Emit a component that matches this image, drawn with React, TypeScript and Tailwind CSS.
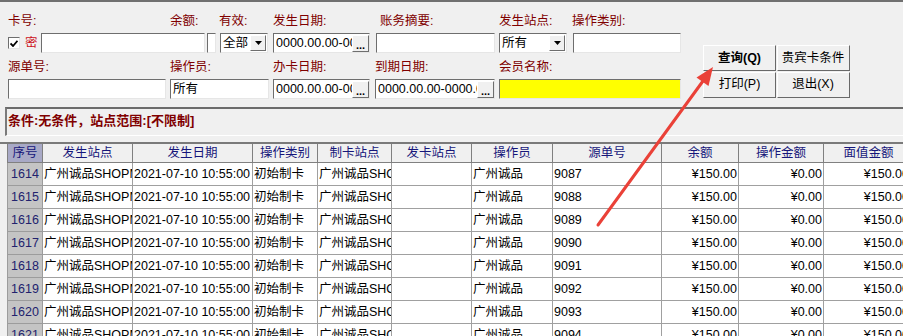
import type { ReactNode } from "react"

const cols = [
  { t: "序号", w: "w-[36px]" },
  { t: "发生站点", w: "w-[90px]" },
  { t: "发生日期", w: "w-[120px]" },
  { t: "操作类别", w: "w-[65px]" },
  { t: "制卡站点", w: "w-[74px]" },
  { t: "发卡站点", w: "w-[80px]" },
  { t: "操作员", w: "w-[81px]" },
  { t: "源单号", w: "w-[109px]" },
  { t: "余额", w: "w-[77px]" },
  { t: "操作金额", w: "w-[85px]" },
  { t: "面值金额", w: "w-[90px]" },
]

const rows = Array.from({ length: 8 }, (_, i) => ({
  no: String(1614 + i),
  cells: [
    "广州诚品SHOPMALL",
    "2021-07-10 10:55:00",
    "初始制卡",
    "广州诚品SHOPMALL",
    "",
    "广州诚品",
    String(9087 + i),
    "¥150.00",
    "¥0.00",
    "¥150.00",
  ],
}))

const Label = ({ w, children }: { w: string; children: ReactNode }) => (
  <div className={`${w} shrink-0 text-[#800000] whitespace-nowrap`}>{children}</div>
)

const Field = ({ w, bg = "bg-white", children }: { w: string; bg?: string; children?: ReactNode }) => (
  <div className={`${w} ${bg} h-[20px] shrink-0 flex items-center overflow-hidden border border-t-[#6e6e6e] border-l-[#6e6e6e] border-b-[#e6e6e6] border-r-[#e6e6e6] pl-[2px] whitespace-nowrap text-black`}>
    {children}
  </div>
)

const Raised = ({ className, children }: { className: string; children?: ReactNode }) => (
  <div className={`${className} bg-[#f0f0f0] border border-t-white border-l-white border-b-[#6e6e6e] border-r-[#6e6e6e] flex items-center justify-center shrink-0`}>
    {children}
  </div>
)

const Select = ({ w, text }: { w: string; text: string }) => (
  <Field w={w}>
    <span className="flex-1">{text}</span>
    <Raised className="w-[16px] h-[16px] mr-[1px]">
      <svg width="7" height="4" viewBox="0 0 7 4"><path d="M0 0h7L3.5 4z" fill="#000" /></svg>
    </Raised>
  </Field>
)

const DateField = ({ w, text }: { w: string; text: string }) => (
  <Field w={w}>
    <span className="flex-1 min-w-0 overflow-hidden">{text}</span>
    <Raised className="w-[17px] h-[17px]">
      <span className="font-bold leading-none mt-[4px] text-[11px]">...</span>
    </Raised>
  </Field>
)

const Btn = ({ children, bold }: { children: ReactNode; bold?: boolean }) => (
  <div className={`w-[73px] h-[26px] flex items-center justify-center bg-[#f0f0f0] border border-t-white border-l-white border-b-[#696969] border-r-[#696969] ${bold ? "font-bold" : ""}`}>
    {children}
  </div>
)

export default function App() {
  return (
    <div className="relative w-[903px] h-[336px] overflow-hidden bg-[#f0f0f0] font-['Liberation_Sans','Noto_Sans_CJK_SC',sans-serif] text-[12.5px] text-black border-t-2 border-[#707070]">
      {/* filter form */}
      <div className="h-[105px] flex">
        <div className="w-[690px] pl-[8px] pt-[11px]">
          <div className="flex h-[17px] leading-[17px]">
            <Label w="w-[162px]">卡号:</Label>
            <Label w="w-[49px]">余额:</Label>
            <Label w="w-[54px]">有效:</Label>
            <Label w="w-[107px]">发生日期:</Label>
            <Label w="w-[119px]">账务摘要:</Label>
            <Label w="w-[73px]">发生站点:</Label>
            <Label w="w-[100px]">操作类别:</Label>
          </div>
          <div className="flex items-center mt-[3px] h-[20px]">
            <div className="w-[12px] h-[12px] bg-white border border-t-[#6e6e6e] border-l-[#6e6e6e] border-b-[#e6e6e6] border-r-[#e6e6e6] flex items-center justify-center">
              <svg width="8" height="7" viewBox="0 0 8 7"><path d="M0.5 3.5L3 6L7.5 0.8" stroke="#000" strokeWidth="1.8" fill="none" /></svg>
            </div>
            <span className="ml-[5px] w-[16px] text-[#cc1020]">密</span>
            <Field w="w-[164px]" />
            <div className="ml-[2px]"><Field w="w-[9px]" /></div>
            <div className="ml-[4px]"><Select w="w-[48px]" text="全部" /></div>
            <div className="ml-[5px]"><DateField w="w-[97px]" text="0000.00.00-0000.00.00" /></div>
            <div className="ml-[6px]"><Field w="w-[119px]" /></div>
            <div className="ml-[4px]"><Select w="w-[68px]" text="所有" /></div>
            <div className="ml-[6px]"><Field w="w-[108px]" /></div>
          </div>
          <div className="flex h-[17px] leading-[17px] mt-[6px]">
            <Label w="w-[162px]">源单号:</Label>
            <Label w="w-[103px]">操作员:</Label>
            <Label w="w-[102px]">办卡日期:</Label>
            <Label w="w-[124px]">到期日期:</Label>
            <Label w="w-[100px]">会员名称:</Label>
          </div>
          <div className="flex items-center mt-[3px] h-[20px]">
            <Field w="w-[158px]" />
            <div className="ml-[4px]"><Field w="w-[99px]">所有</Field></div>
            <div className="ml-[4px]"><DateField w="w-[97px]" text="0000.00.00-0000.00.00" /></div>
            <div className="ml-[5px]"><DateField w="w-[120px]" text="0000.00.00-0000.00.00" /></div>
            <div className="ml-[4px]"><Field w="w-[182px]" bg="bg-[#ffff00]" /></div>
          </div>
        </div>
        <div className="ml-[13px] mt-[43px] grid grid-cols-2 w-[147px] h-[53px] self-start">
          <Btn bold>查询(Q)</Btn>
          <Btn>贵宾卡条件</Btn>
          <Btn>打印(P)</Btn>
          <Btn>退出(X)</Btn>
        </div>
      </div>

      {/* condition bar */}
      <div className="border-t-2 border-[#6b6b6b] h-[29px] ml-[5px] border-l-2 border-l-[#7a7a7a] border-b border-b-white">
        <div className="pl-[1px] pt-[2px] font-bold text-[#800000] text-[13px]">条件:无条件，站点范围:[不限制]</div>
      </div>

      {/* grid */}
      <div className="mt-[6px] border-t-2 border-[#7a7a7a] pl-[7px] bg-[#f0f0f0]">
        <div className="flex h-[19px] border-b border-[#808080] bg-[#f0f0f0]">
          {cols.map((c, i) => (
            <div
              key={c.t}
              className={`${c.w} shrink-0 flex items-center justify-center border-r border-[#808080] text-[#16167a] ${i === 0 ? "bg-[#a8a9c6] border-l" : ""}`}
            >
              {c.t}
            </div>
          ))}
        </div>
        {rows.map((r) => (
          <div key={r.no} className="flex h-[23px] bg-white">
            <div className="w-[36px] shrink-0 flex items-center justify-center bg-[#c4c4c4] border-r border-b border-l border-[#9c9c9c] text-[#22226e]">
              {r.no}
            </div>
            {r.cells.map((v, j) => (
              <div
                key={j}
                className={`${cols[j + 1].w} shrink-0 flex items-center overflow-hidden whitespace-nowrap border-r border-b border-[#a0a0a0] ${j >= 7 ? "justify-end pr-[1px]" : "pl-[1px]"} ${j === 9 ? "pr-[4px]" : ""}`}
              >
                {v}
              </div>
            ))}
          </div>
        ))}
      </div>

      {/* red annotation arrow */}
      <svg className="absolute inset-0 pointer-events-none" width="903" height="336" viewBox="0 -2 903 336">
        <line x1="598" y1="221" x2="703" y2="77" stroke="#ea4138" strokeWidth="3" strokeLinecap="round" />
        <polygon points="713,63 708.5,82 696.5,73.5" fill="#ea4138" />
      </svg>
    </div>
  )
}
